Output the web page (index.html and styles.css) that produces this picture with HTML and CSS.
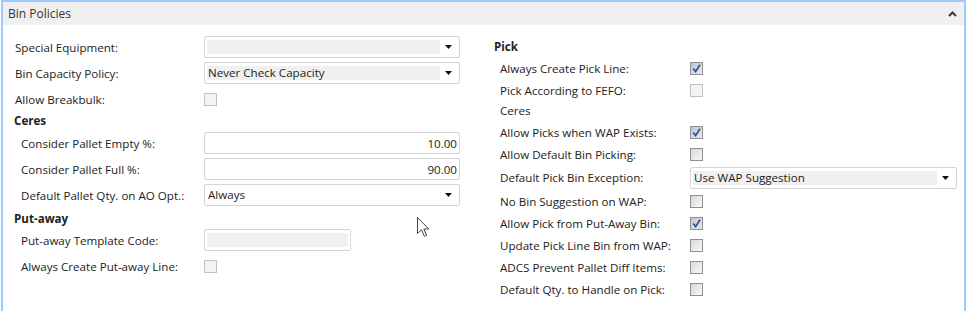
FILE: index.html
```html
<!DOCTYPE html>
<html lang="en">
<head>
  <meta charset="UTF-8" />
  <title>Bin Policies</title>
  <link rel="stylesheet" href="styles.css">
</head>
<body>

  <div class="panel">
    <div class="panel-head">
      <span class="panel-title">Bin Policies</span>
      <svg class="collapse" width="9" height="6" viewBox="0 0 9 6">
        <polyline points="1,5 4.5,1.5 8,5" fill="none" stroke="#3c3c3c" stroke-width="2" />
      </svg>
    </div>

    <div class="panel-body">
      <!-- left column -->
      <div class="col col-left">
        <div class="row row-top">
          <span class="label">Special Equipment:</span>
          <div class="field select">
            <span class="fill"></span>
            <span class="arrow"><svg width="7" height="4" viewBox="0 0 7 4"><polygon points="0,0 7,0 3.5,4" fill="#111" /></svg></span>
          </div>
        </div>
        <div class="row row-top">
          <span class="label">Bin Capacity Policy:</span>
          <div class="field select">
            <span class="fill">Never Check Capacity</span>
            <span class="arrow"><svg width="7" height="4" viewBox="0 0 7 4"><polygon points="0,0 7,0 3.5,4" fill="#111" /></svg></span>
          </div>
        </div>
        <div class="row row-top">
          <span class="label">Allow Breakbulk:</span>
          <span class="check dim"></span>
        </div>

        <div class="heading heading-ceres">Ceres</div>
        <div class="row">
          <span class="label">Consider Pallet Empty %:</span>
          <div class="field num">10.00</div>
        </div>
        <div class="row">
          <span class="label">Consider Pallet Full %:</span>
          <div class="field num">90.00</div>
        </div>
        <div class="row">
          <span class="label">Default Pallet Qty. on AO Opt.:</span>
          <div class="field select">
            <span class="fill plain">Always</span>
            <span class="arrow"><svg width="7" height="4" viewBox="0 0 7 4"><polygon points="0,0 7,0 3.5,4" fill="#111" /></svg></span>
          </div>
        </div>

        <div class="heading heading-putaway">Put-away</div>
        <div class="row">
          <span class="label">Put-away Template Code:</span>
          <div class="field short">
            <span class="fill"></span>
          </div>
        </div>
        <div class="row">
          <span class="label">Always Create Put-away Line:</span>
          <span class="check dim"></span>
        </div>
      </div>

      <!-- right column -->
      <div class="col col-right">
        <div class="heading heading-pick">Pick</div>
        <div class="row">
          <span class="label">Always Create Pick Line:</span>
          <span class="check on"><svg width="11" height="11" viewBox="0 0 11 11"><path d="M2.3 5.6 L4.6 8.6 L9 1.8" fill="none" stroke="#2b4c9e" stroke-width="1.7" /></svg></span>
        </div>
        <div class="row">
          <span class="label">Pick According to FEFO:</span>
          <span class="check dim"></span>
        </div>
        <div class="subhead">Ceres</div>
        <div class="row">
          <span class="label">Allow Picks when WAP Exists:</span>
          <span class="check on"><svg width="11" height="11" viewBox="0 0 11 11"><path d="M2.3 5.6 L4.6 8.6 L9 1.8" fill="none" stroke="#2b4c9e" stroke-width="1.7" /></svg></span>
        </div>
        <div class="row">
          <span class="label">Allow Default Bin Picking:</span>
          <span class="check"></span>
        </div>
        <div class="row row-select">
          <span class="label">Default Pick Bin Exception:</span>
          <div class="field select">
            <span class="fill">Use WAP Suggestion</span>
            <span class="arrow"><svg width="7" height="4" viewBox="0 0 7 4"><polygon points="0,0 7,0 3.5,4" fill="#111" /></svg></span>
          </div>
        </div>
        <div class="row">
          <span class="label">No Bin Suggestion on WAP:</span>
          <span class="check"></span>
        </div>
        <div class="row">
          <span class="label">Allow Pick from Put-Away Bin:</span>
          <span class="check on"><svg width="11" height="11" viewBox="0 0 11 11"><path d="M2.3 5.6 L4.6 8.6 L9 1.8" fill="none" stroke="#2b4c9e" stroke-width="1.7" /></svg></span>
        </div>
        <div class="row">
          <span class="label">Update Pick Line Bin from WAP:</span>
          <span class="check"></span>
        </div>
        <div class="row">
          <span class="label">ADCS Prevent Pallet Diff Items:</span>
          <span class="check"></span>
        </div>
        <div class="row">
          <span class="label">Default Qty. to Handle on Pick:</span>
          <span class="check"></span>
        </div>
      </div>
    </div>

    <!-- mouse pointer left in the screenshot -->
    <svg class="pointer" width="13" height="21" viewBox="0 0 13 21">
      <path d="M0.5 0.5 L0.5 16.5 L4.5 12.8 L7.3 19.3 L9.6 18.3 L6.9 12 L11.8 12 Z" fill="#fff" stroke="#444" stroke-width="1" />
    </svg>
  </div>

</body>
</html>
```

FILE: styles.css
```css
body {
  margin: 0;
  font-family: 'Open Sans', 'Noto Sans', sans-serif;
  font-size: 11.6px;
  color: #222;
  background: #fff;
}

.panel {
  position: relative;
  margin-left: 1px;
  width: 965px;
  min-height: 311px;
  box-sizing: border-box;
  border: 2px solid #9ccafc;
  border-bottom: none;
}

.panel-head {
  height: 23px;
  background-color: #f0f0f0;
  display: flex;
  align-items: center;
  justify-content: space-between;
  padding: 0 7px 0 5px;
}

.panel-title {
  font-size: 12px;
  color: #333;
}

.panel-body {
  display: flex;
  gap: 34px;
  padding-left: 11px;
}

.col-left {
  width: 446px;
  padding-top: 9px;
}

.col-right {
  width: 463px;
  padding-top: 12px;
}

.row {
  display: flex;
  align-items: center;
  height: 26px;
}

.col-right .row {
  height: 22px;
}

.col-right .row-select {
  height: 25px;
}

.label {
  flex: none;
  width: 190px;
  padding-left: 7px;
  box-sizing: border-box;
  white-space: nowrap;
}

.row-top .label {
  padding-left: 1px;
}

.col-right .label {
  width: 196px;
  padding-left: 6px;
}

.heading {
  font-weight: bold;
}

.heading-ceres {
  height: 18px;
  line-height: 18px;
}

.heading-putaway {
  height: 19px;
  line-height: 21px;
}

.heading-pick {
  height: 20px;
  line-height: 20px;
}

.subhead {
  height: 20px;
  line-height: 20px;
  padding-left: 6px;
}

/* text boxes and drop downs */
.field {
  width: 256px;
  height: 22px;
  box-sizing: border-box;
  border: 1px solid #d4d4d4;
  border-radius: 2px;
  background: #fff;
  display: flex;
  align-items: stretch;
  padding: 3px 2px;
}

.col-right .field {
  width: 267px;
}

.field.short {
  width: 147px;
}

.fill {
  flex: 1;
  background-color: #f0f0f0;
  padding-left: 1px;
  line-height: 14px;
  white-space: nowrap;
}

.fill.plain {
  background: none;
}

.arrow {
  width: 17px;
  display: flex;
  align-items: center;
  justify-content: center;
}

.field.num {
  justify-content: flex-end;
  align-items: center;
  padding-right: 2px;
}

/* check boxes */
.check {
  width: 13px;
  height: 13px;
  box-sizing: border-box;
  border: 1px solid #909090;
  background: linear-gradient(135deg, #d9d9d9, #f7f7f7);
  display: flex;
}

.check.dim {
  border-color: #c2c2c2;
  background: #f3f3f3;
}

.check.on {
  background: linear-gradient(135deg, #c3c6cb, #e9eaec);
}

.pointer {
  position: absolute;
  left: 414px;
  top: 215px;
}
```
